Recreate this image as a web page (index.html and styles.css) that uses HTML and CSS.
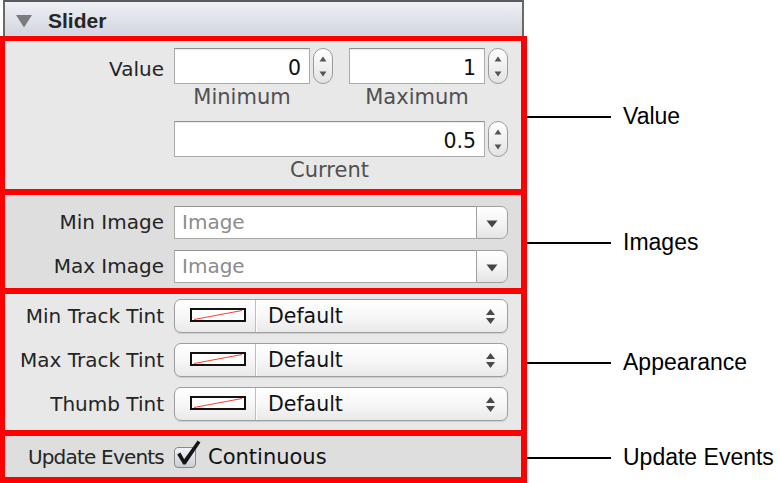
FILE: index.html
```html
<!DOCTYPE html>
<html lang="en">
<head>
<meta charset="utf-8">
<title>Slider inspector</title>
<link rel="stylesheet" href="styles.css">
</head>
<body>
<main class="sheet">
  <header class="head">
    <svg class="disclosure" width="18" height="14" viewBox="0 0 18 14"><polygon points="1,1 17,1 9,13.5" fill="#7b7b7b"/></svg>
    <span class="title">Slider</span>
  </header>

  <section class="group">
    <div class="box box-light box-value">
      <div class="row">
        <div class="label label-field">Value</div>
        <div class="pair">
          <div class="numfield">
            <div class="field">0</div>
            <svg class="stepper" width="20" height="36" viewBox="0 0 20 36"><defs><linearGradient id="sg1" x1="0" y1="0" x2="0" y2="1"><stop offset="0" stop-color="#ffffff"/><stop offset="1" stop-color="#e2e2e2"/></linearGradient></defs><rect x="0.5" y="0.5" width="19" height="35" rx="9.5" fill="url(#sg1)" stroke="#9a9a9a"/><polygon points="6.5,13.5 13.5,13.5 10,8.5" fill="#555"/><polygon points="6.5,23.5 13.5,23.5 10,28.5" fill="#555"/></svg>
          </div>
          <div class="caption cap-small">Minimum</div>
        </div>
        <div class="pair">
          <div class="numfield">
            <div class="field">1</div>
            <svg class="stepper" width="20" height="36" viewBox="0 0 20 36"><rect x="0.5" y="0.5" width="19" height="35" rx="9.5" fill="url(#sg1)" stroke="#9a9a9a"/><polygon points="6.5,13.5 13.5,13.5 10,8.5" fill="#555"/><polygon points="6.5,23.5 13.5,23.5 10,28.5" fill="#555"/></svg>
          </div>
          <div class="caption cap-small">Maximum</div>
        </div>
      </div>
      <div class="row row-current">
        <div class="label"></div>
        <div class="pair">
          <div class="numfield">
            <div class="field field-wide">0.5</div>
            <svg class="stepper" width="20" height="36" viewBox="0 0 20 36"><rect x="0.5" y="0.5" width="19" height="35" rx="9.5" fill="url(#sg1)" stroke="#9a9a9a"/><polygon points="6.5,13.5 13.5,13.5 10,8.5" fill="#555"/><polygon points="6.5,23.5 13.5,23.5 10,28.5" fill="#555"/></svg>
          </div>
          <div class="caption cap-wide">Current</div>
        </div>
      </div>
    </div>
    <div class="callout"><span class="rule"></span><span class="note">Value</span></div>
  </section>

  <section class="group overlap">
    <div class="box box-dark box-images">
      <div class="row">
        <div class="label label-combo">Min Image</div>
        <div class="combo">
          <div class="combo-text">Image</div>
          <div class="combo-btn"><svg width="12" height="8" viewBox="0 0 12 8"><polygon points="0.5,0.5 11.5,0.5 6,7.5" fill="#444"/></svg></div>
        </div>
      </div>
      <div class="row">
        <div class="label label-combo">Max Image</div>
        <div class="combo">
          <div class="combo-text">Image</div>
          <div class="combo-btn"><svg width="12" height="8" viewBox="0 0 12 8"><polygon points="0.5,0.5 11.5,0.5 6,7.5" fill="#444"/></svg></div>
        </div>
      </div>
    </div>
    <div class="callout"><span class="rule"></span><span class="note">Images</span></div>
  </section>

  <section class="group overlap">
    <div class="box box-light box-appearance">
      <div class="row">
        <div class="label label-popup">Min Track Tint</div>
        <div class="popup">
          <svg class="swatch" width="56" height="14" viewBox="0 0 56 14"><rect x="1" y="1" width="54" height="12" fill="#fff" stroke="#111" stroke-width="2"/><line x1="4" y1="11.5" x2="52" y2="2.5" stroke="#ff3b30" stroke-width="1"/></svg>
          <span class="sep"></span>
          <span class="popup-text">Default</span>
          <svg class="updown" width="9" height="15" viewBox="0 0 9 15"><polygon points="0,6 9,6 4.5,0" fill="#4a4a4a"/><polygon points="0,9 9,9 4.5,15" fill="#4a4a4a"/></svg>
        </div>
      </div>
      <div class="row">
        <div class="label label-popup">Max Track Tint</div>
        <div class="popup">
          <svg class="swatch" width="56" height="14" viewBox="0 0 56 14"><rect x="1" y="1" width="54" height="12" fill="#fff" stroke="#111" stroke-width="2"/><line x1="4" y1="11.5" x2="52" y2="2.5" stroke="#ff3b30" stroke-width="1"/></svg>
          <span class="sep"></span>
          <span class="popup-text">Default</span>
          <svg class="updown" width="9" height="15" viewBox="0 0 9 15"><polygon points="0,6 9,6 4.5,0" fill="#4a4a4a"/><polygon points="0,9 9,9 4.5,15" fill="#4a4a4a"/></svg>
        </div>
      </div>
      <div class="row">
        <div class="label label-popup">Thumb Tint</div>
        <div class="popup">
          <svg class="swatch" width="56" height="14" viewBox="0 0 56 14"><rect x="1" y="1" width="54" height="12" fill="#fff" stroke="#111" stroke-width="2"/><line x1="4" y1="11.5" x2="52" y2="2.5" stroke="#ff3b30" stroke-width="1"/></svg>
          <span class="sep"></span>
          <span class="popup-text">Default</span>
          <svg class="updown" width="9" height="15" viewBox="0 0 9 15"><polygon points="0,6 9,6 4.5,0" fill="#4a4a4a"/><polygon points="0,9 9,9 4.5,15" fill="#4a4a4a"/></svg>
        </div>
      </div>
    </div>
    <div class="callout"><span class="rule"></span><span class="note">Appearance</span></div>
  </section>

  <section class="group overlap">
    <div class="box box-dark box-events">
      <div class="row">
        <div class="label label-check">Update Events</div>
        <svg class="checkbox" width="27" height="29" viewBox="0 0 27 29"><defs><linearGradient id="cg" x1="0" y1="0" x2="0" y2="1"><stop offset="0" stop-color="#f2f4f8"/><stop offset="1" stop-color="#c9cdd6"/></linearGradient></defs><rect x="0.5" y="7.5" width="21" height="20" rx="3.5" fill="url(#cg)" stroke="#8a8a8a"/><polygon points="3.2,14.6 6.4,12.6 10.2,19.2 23.6,0.6 26.4,2.4 11.6,24.6 9.2,24.6" fill="#151515"/></svg>
        <span class="check-text">Continuous</span>
      </div>
    </div>
    <div class="callout"><span class="rule"></span><span class="note">Update Events</span></div>
  </section>
</main>
</body>
</html>
```

FILE: styles.css
```css
* { box-sizing: border-box; }

html, body {
  margin: 0;
  padding: 0;
  background: #ffffff;
}

body {
  width: 779px;
  height: 483px;
  overflow: hidden;
  font-family: "DejaVu Sans", sans-serif;
}

.sheet {
  display: flex;
  flex-direction: column;
}

/* header strip */
.head {
  margin-left: 3px;
  width: 521px;
  height: 36px;
  border-top: 2px solid #5a5a5a;
  border-left: 2px solid #6a6a6a;
  border-right: 2px solid #6a6a6a;
  background: linear-gradient(#eef0f5, #d2d5de);
  padding: 4px 0 0 10px;
  display: flex;
  align-items: center;
  gap: 15px;
}

.disclosure { display: block; flex: none; }

.title {
  font-family: "Liberation Sans", Arial, sans-serif;
  font-weight: bold;
  font-size: 21px;
  line-height: 30px;
  color: #262626;
}

/* groups: outlined box + callout */
.group {
  display: flex;
  align-items: center;
}

.overlap { margin-top: -6px; }

.box {
  flex: none;
  width: 527px;
  border: 6px solid #ff0000;
  border-left-width: 5px;
}

.box-light { background: #e8e8e8; }
.box-dark { background: #dedede; }

.box-value { border-top-width: 5px; padding: 7px 0 6px; }
.box-images { padding: 11px 0 5px; display: flex; flex-direction: column; gap: 11px; }
.box-appearance { padding: 5px 0 9px; display: flex; flex-direction: column; gap: 10px; }
.box-events { padding: 4px 0 8px; }

.row {
  display: flex;
  align-items: flex-start;
  gap: 10px;
}

.row-current { margin-top: 11px; }

.label {
  flex: none;
  width: 159px;
  text-align: right;
  font-size: 20px;
  line-height: 22px;
  color: #242424;
  white-space: nowrap;
}

.label-field { padding-top: 10px; }
.label-combo { line-height: 33px; }
.label-popup { line-height: 34px; }
.label-check { padding-top: 6px; letter-spacing: -0.8px; }

/* number fields */
.pair {
  display: flex;
  flex-direction: column;
}

.pair + .pair { margin-left: 6px; }

.numfield {
  display: flex;
  align-items: center;
  gap: 3px;
}

.field {
  width: 136px;
  height: 36px;
  background: #ffffff;
  border: 1px solid #ababab;
  border-top-color: #8f8f8f;
  box-shadow: inset 0 1px 1px rgba(0, 0, 0, 0.08);
  padding: 5px 8px 0 0;
  text-align: right;
  font-size: 20.5px;
  line-height: 29px;
  color: #111111;
}

.field-wide { width: 311px; }

.stepper { display: block; flex: none; }

.caption {
  text-align: center;
  font-size: 21px;
  line-height: 26px;
  color: #505050;
}

.cap-small { width: 136px; }
.cap-wide { width: 311px; }

/* combo boxes */
.combo {
  display: flex;
  width: 334px;
  height: 33px;
}

.combo-text {
  flex: 1;
  background: #ffffff;
  border: 1px solid #a9a9a9;
  border-top-color: #949494;
  border-right: none;
  padding-left: 7px;
  font-size: 20px;
  line-height: 31px;
  color: #8c8c8c;
}

.combo-btn {
  flex: none;
  width: 32px;
  border: 1px solid #a0a0a0;
  border-radius: 0 7px 7px 0;
  background: linear-gradient(#ffffff, #f3f3f3 55%, #e4e4e4);
  display: flex;
  align-items: center;
  justify-content: center;
  padding-top: 3px;
}

.combo-btn svg { display: block; }

/* popups */
.popup {
  display: flex;
  align-items: center;
  width: 334px;
  height: 34px;
  border: 1px solid #9e9e9e;
  border-radius: 7px;
  background: linear-gradient(#ffffff, #f7f7f7 50%, #e9e9e9);
  box-shadow: 0 1px 1px rgba(0, 0, 0, 0.12);
  padding: 0 12px 0 15px;
}

.swatch { display: block; flex: none; margin-top: -2px; }

.sep {
  align-self: stretch;
  width: 2px;
  margin-left: 9px;
  border-left: 1px solid #bdbdbd;
  border-right: 1px solid #ffffff;
}

.popup-text {
  margin-left: 11px;
  font-size: 20.5px;
  line-height: 32px;
  color: #111111;
}

.updown { display: block; margin-left: auto; }

/* checkbox */
.checkbox { display: block; flex: none; }

.check-text {
  margin-left: -3px;
  padding-top: 6px;
  font-size: 21px;
  line-height: 22px;
  color: #111111;
}

/* callouts */
.callout {
  display: flex;
  align-items: center;
}

.rule {
  display: block;
  width: 84px;
  height: 2px;
  background: #000000;
  margin-top: 2px;
}

.note {
  margin-left: 12px;
  font-family: "Liberation Sans", Arial, sans-serif;
  font-size: 23px;
  line-height: 26px;
  color: #000000;
  white-space: nowrap;
}
```
